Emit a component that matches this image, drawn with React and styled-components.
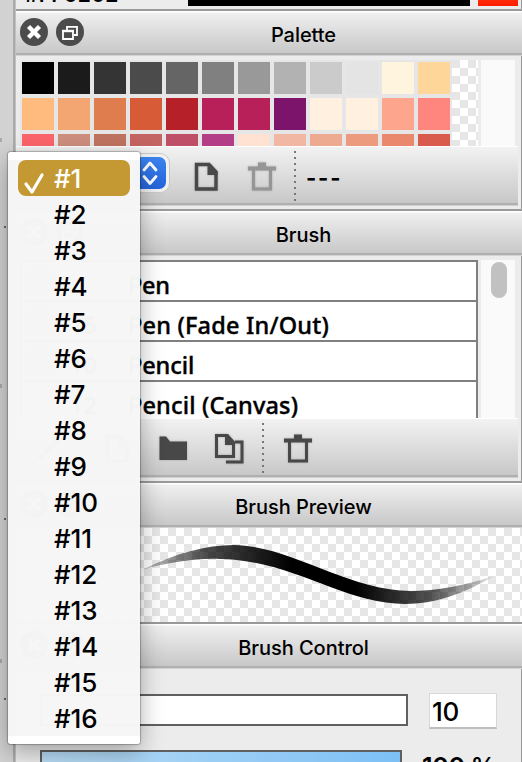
import React from "react";
import styled, { createGlobalStyle } from "styled-components";

const Global = createGlobalStyle`
  * { box-sizing: border-box; }
  body { margin: 0; overflow: hidden; background: #ececec; }
`;

const checker = "repeating-conic-gradient(#fff 0 25%, #e6e6e6 0 50%)";

const Window = styled.div`
  position: relative;
  display: flex;
  width: 522px;
  height: 762px;
  overflow: hidden;
  font-family: Inter, sans-serif;
  color: #000;
`;
const Gutter = styled.div`
  position: relative;
  flex: 0 0 16px;
  background: #d2d2d2;
  border-right: 1px solid #c0c0c0;
  box-shadow: inset -2px 0 #aaa;
`;
const Tick = styled.i`
  position: absolute;
  left: ${(p) => (p.$dot ? 4 : 0)}px;
  top: ${(p) => p.$y}px;
  width: 2px;
  height: ${(p) => (p.$dot ? 2 : 4)}px;
  background: ${(p) => (p.$dot ? "#666" : "#aaa")};
`;
const Docks = styled.main`
  width: 506px;
  height: 762px;
  display: flex;
  flex-direction: column;
  background: #ececec;
  border-right: 1px solid #999;
`;
const ColorRow = styled.div`
  position: relative;
  display: flex;
  flex: 0 0 9px;
  height: 9px;
  overflow: hidden;
  padding-left: 172px;
  gap: 8px;
`;
const Hex = styled.span`
  position: absolute;
  left: 9px;
  top: -17px;
  font-size: 21px;
  line-height: 24px;
  font-weight: 600;
  letter-spacing: 0.2px;
`;
const ColorBar = styled.span`
  width: ${(p) => p.$w}px;
  height: 6px;
  background: ${(p) => p.$c};
`;
const TitleBar = styled.header`
  display: flex;
  align-items: center;
  flex: 0 0 47px;
  height: 47px;
  margin-right: -1px;
  padding: 1px 0 0 4px;
  border-top: 2px solid #999;
  border-bottom: 1px solid #d4d4d4;
  background: linear-gradient(#fff 0 1px, #efefef 2px, #c8c8c8 42px, #b0b0b0 42px);
`;
const Title = styled.h2`
  flex: 1;
  margin: 3px 0 0;
  padding-right: 7px;
  text-align: center;
  font-size: 20px;
  font-weight: 500;
  line-height: 24px;
  letter-spacing: -0.05px;
`;
const BarIcon = styled.svg`
  display: block;
  width: 28px;
  height: 28px;
  margin: -4px 8px 0 0;
`;
const PaletteArea = styled.section`
  display: flex;
  flex: 0 0 90px;
  height: 90px;
  padding: 4px 6px 0 4px;
`;
const Swatches = styled.div`
  display: grid;
  grid-template-columns: repeat(12, 32px);
  grid-auto-rows: 32px;
  gap: 4px;
  width: 432px;
  height: 86px;
  padding: 2px;
  overflow: hidden;
  background: #e6e6e6;
`;
const Swatch = styled.span`
  background: ${(p) => p.$c};
`;
const Transparent = styled.div`
  width: 26px;
  background: ${checker} 0 0 / 16px 16px;
`;
const Track = styled.div`
  width: 34px;
  margin-left: 3px;
  padding: 2px 8px 0 10px;
  background: #fafafa;
`;
const Thumb = styled.div`
  height: 36px;
  border-radius: 8px;
  background: #c1c1c1;
`;
const Toolbar = styled.div`
  display: flex;
  align-items: center;
  flex: 0 0 60px;
  height: 60px;
  margin-right: 3px;
  padding-left: ${(p) => p.$pad}px;
  border-top: 1px solid #fff;
  border-bottom: 1px solid #d0d0d0;
  background: linear-gradient(#f2f2f2, #c8c8c8 calc(100% - 2px), #b0b0b0 calc(100% - 2px));
`;
const Spacer = styled.div`
  flex: 0 0 3px;
`;
const Combo = styled.div`
  display: flex;
  align-items: center;
  justify-content: flex-end;
  width: 152px;
  height: 40px;
  margin-top: -6px;
  padding-right: 3px;
  border: 1px solid #c9c9c9;
  border-radius: 10px;
  background: #f1f1f1;
`;
const Stepper = styled.svg`
  width: 32px;
  height: 32px;
  border-radius: 7px;
  background: linear-gradient(#3c84f0, #2464dc);
`;
const ToolIcon = styled.svg`
  flex: none;
  width: 32px;
  height: 32px;
  margin: 2px 0 0 ${(p) => p.$ml}px;
  color: ${(p) => (p.$off ? "#969696" : "#484848")};
  filter: drop-shadow(0 0 1px rgba(80, 80, 80, 0.35));
`;
const Divider = styled.i`
  width: 2px;
  height: 50px;
  margin-left: ${(p) => p.$ml}px;
  background: repeating-linear-gradient(#777 0 2px, transparent 2px 6px);
`;
const Dashes = styled.span`
  margin: 3px 0 0 10px;
  font-size: 22px;
  font-weight: 700;
  line-height: 26px;
  letter-spacing: 1.8px;
`;
const BrushArea = styled.section`
  display: flex;
  flex: 0 0 162px;
  height: 162px;
  padding: 4px 6px 0 4px;
  overflow: hidden;
`;
const BrushList = styled.div`
  width: 458px;
  border: solid #808080;
  border-width: 0 2px 0 2px;
  background: #fff;
`;
const BrushRow = styled.div`
  display: flex;
  align-items: flex-end;
  height: 40px;
  border-top: 2px solid #808080;
  font: 500 23.5px/29px "Noto Sans", sans-serif;
  -webkit-text-stroke: 0.4px #000;
  white-space: nowrap;
`;
const BrushThumb = styled.i`
  width: 28px;
  height: 28px;
  margin: 0 14px 6px 4px;
  background: ${(p) => p.$c};
`;
const BrushSize = styled.span`
  width: 60px;
  padding-left: 2px;
`;
const BrushName = styled.span`
  letter-spacing: ${(p) => p.$ls}px;
`;
const Preview = styled.svg`
  flex: 0 0 94px;
  width: 506px;
  height: 94px;
  background: ${checker} 8px 0 / 16px 16px;
`;
const Controls = styled.section`
  padding: 25px 0 0 24px;
`;
const ControlRow = styled.div`
  display: flex;
  height: 56px;
`;
const Slider = styled.div`
  width: ${(p) => p.$w}px;
  height: 32px;
  border: 2px solid #606060;
  background: ${(p) => p.$fill || "#fff"};
`;
const NumberBox = styled.div`
  width: 68px;
  height: 36px;
  margin: -1px 0 0 21px;
  padding-left: 2px;
  border: 1px solid #d8d8d8;
  border-bottom: 2px solid #bdbdbd;
  background: #fff;
  font-size: 26px;
  font-weight: 500;
  line-height: 35px;
  letter-spacing: -0.4px;
`;
const Percent = styled.span`
  margin: 2px 0 0 20px;
  font-size: 25px;
  font-weight: 600;
  line-height: 30px;
  letter-spacing: -0.3px;
  white-space: nowrap;
`;
const Menu = styled.div`
  position: absolute;
  left: 8px;
  top: 152px;
  width: 132px;
  height: 592px;
  padding: 8px 10px;
  border-radius: 3px;
  background: linear-gradient(#fff 0 8px, rgba(246, 246, 246, 0.985) 8px 584px, #fff 584px);
  box-shadow: 0 0 1px 1px rgba(0, 0, 0, 0.25), 0 8px 24px rgba(0, 0, 0, 0.32);
`;
const MenuItem = styled.div`
  display: flex;
  align-items: center;
  height: 36px;
  padding: 2px 0 0 ${(p) => (p.$on ? 5 : 36)}px;
  border-radius: 8px;
  background: ${(p) => (p.$on ? "#c49933" : "transparent")};
  color: ${(p) => (p.$on ? "#fff" : "#000")};
  font-size: 26px;
  font-weight: 500;
  line-height: 34px;
  letter-spacing: -0.1px;
`;
const Check = styled.svg`
  width: 24px;
  height: 26px;
  margin: 8px 7px 0 0;
`;

const rows = [
  ["#000", "#1b1b1b", "#343434", "#4b4b4b", "#656565", "#808080", "#999", "#b2b2b2", "#cbcbcb", "#e4e4e4", "#fff5df", "#ffd699"],
  ["#ffbb7e", "#f3a572", "#df7d4f", "#d65b36", "#b52029", "#b72059", "#b72059", "#7c146c", "#fff0df", "#fff0df", "#fea58e", "#ff867e"],
  ["#fb646a", "#cd8e7d", "#be735f", "#c46462", "#bf4f67", "#b33d87", "#ffe2d2", "#f1b7a3", "#edaa91", "#ed9b7f", "#e9886d", "#d95b4d"],
];
const brushes = [
  ["", "Pen", "#ccc", -0.3],
  ["15", "Pen (Fade In/Out)", "#ccc", 0.2],
  ["10", "Pencil", "#ccc", -0.1],
  ["12", "Pencil (Canvas)", "#eee", 0.15],
];

function TitleIcons() {
  return (
    <>
      <BarIcon viewBox="0 0 28 28">
        <circle cx="14" cy="14" r="14" fill="#4c4c4c" />
        <path d="M8.5 8.5l11 11M19.5 8.5L8.5 19.5" stroke="#fff" strokeWidth="4.4" />
      </BarIcon>
      <BarIcon viewBox="0 0 28 28">
        <circle cx="14" cy="14" r="14" fill="#4c4c4c" />
        <path d="M11 12V8.8h10V17h-3M7 13h10v8H7z" fill="none" stroke="#fff" strokeWidth="1.8" />
        <path d="M6 13h12" stroke="#fff" strokeWidth="2.4" />
      </BarIcon>
    </>
  );
}

function DockTitle({ children }) {
  return (
    <TitleBar>
      <TitleIcons />
      <Title>{children}</Title>
    </TitleBar>
  );
}

function PageIcon({ ml }) {
  return (
    <ToolIcon $ml={ml} viewBox="0 0 32 32">
      <path d="M6.5 3.5H19l7 7.5v17H6.500z" fill="none" stroke="currentColor" strokeWidth="3.4" />
      <path d="M17.500 3h3l7 8v3h-10z" fill="currentColor" />
    </ToolIcon>
  );
}

function TrashIcon({ ml, off }) {
  return (
    <ToolIcon $ml={ml} $off={off} viewBox="0 0 32 32">
      <path d="M12 1.500h8v4h10v4H2v-4h10z" fill="currentColor" />
      <path d="M7.500 9v19h17V9" fill="none" stroke="currentColor" strokeWidth="3" />
    </ToolIcon>
  );
}

export default function App() {
  return (
    <Window>
      <Global />
      <Gutter>
        <Tick $y={138} /><Tick $dot $y={226} /><Tick $y={384} />
        <Tick $dot $y={518} /><Tick $y={659} /><Tick $dot $y={698} />
      </Gutter>
      <Docks>
        <ColorRow>
          <Hex>#FF0202</Hex>
          <ColorBar $w={282} $c="#000" />
          <ColorBar $w={40} $c="linear-gradient(#ff2a08, #ff1c00)" />
        </ColorRow>
        <DockTitle>Palette</DockTitle>
        <PaletteArea>
          <Swatches>{rows.flat().map((c, i) => <Swatch key={i} $c={c} />)}</Swatches>
          <Transparent />
          <Track />
        </PaletteArea>
        <Toolbar $pad={2}>
          <Combo>
            <Stepper viewBox="0 0 32 32">
              <path d="M10 13l6-7 6 7M10 19.500l6 7 6-7" fill="none" stroke="#fff" strokeWidth="2.8" strokeLinecap="round" strokeLinejoin="round" />
            </Stepper>
          </Combo>
          <PageIcon ml={20} />
          <TrashIcon ml={24} off />
          <Divider $ml={16} />
          <Dashes>---</Dashes>
        </Toolbar>
        <Spacer />
        <DockTitle>Brush</DockTitle>
        <BrushArea>
          <BrushList>
            {brushes.map(([size, name, color, ls]) => (
              <BrushRow key={name}>
                <BrushThumb $c={color} />
                <BrushSize>{size}</BrushSize>
                <BrushName $ls={ls}>{name}</BrushName>
              </BrushRow>
            ))}
          </BrushList>
          <Track><Thumb /></Track>
        </BrushArea>
        <Toolbar $pad={0}>
          <ToolIcon $ml={16} viewBox="0 0 32 32">
            <path d="M4 27l5-7 4 4zM11 18L25 5l3 3-13 14z" fill="currentColor" />
          </ToolIcon>
          <PageIcon ml={37} />
          <ToolIcon $ml={24} viewBox="0 0 32 32">
            <path d="M2.500 3.500H9l4 5h17v18.500H2.500z" fill="currentColor" />
          </ToolIcon>
          <ToolIcon $ml={24} viewBox="0 0 32 32">
            <path d="M3.500 2.500h10l7 7v14h-17zM22 9h7v20H13" fill="none" stroke="currentColor" strokeWidth="3" />
            <path d="M12 1h3l7 8v3H12z" fill="currentColor" />
          </ToolIcon>
          <Divider $ml={17} />
          <TrashIcon ml={18} />
        </Toolbar>
        <Spacer />
        <DockTitle>Brush Preview</DockTitle>
        <Preview viewBox="0 0 506 94">
          <defs>
            <linearGradient id="ink" x1="126" x2="482" y1="0" y2="0" gradientUnits="userSpaceOnUse">
              <stop offset="0" stopOpacity=".2" />
              <stop offset=".18" stopOpacity=".7" />
              <stop offset=".42" stopOpacity="1" />
              <stop offset=".6" stopOpacity="1" />
              <stop offset=".82" stopOpacity=".65" />
              <stop offset="1" stopOpacity=".05" />
            </linearGradient>
          </defs>
          <path d="M126 42C160 25 190 17 218 17C276 18 330 62 395 63C420 63 450 57 478 48C448 66 418 76 389 76C328 76 276 32 204 31C180 30 154 34 126 42Z" fill="url(#ink)" />
        </Preview>
        <DockTitle>Brush Control</DockTitle>
        <Controls>
          <ControlRow>
            <Slider $w={368} />
            <NumberBox>10</NumberBox>
          </ControlRow>
          <ControlRow>
            <Slider $w={362} $fill="linear-gradient(90deg, #b8dcf5, #7dc0f5)" />
            <Percent>100 %</Percent>
          </ControlRow>
        </Controls>
      </Docks>
      <Menu>
        {Array.from({ length: 16 }, (_, i) => (
          <MenuItem key={i} $on={i === 0}>
            {i === 0 && (
              <Check viewBox="0 0 24 26">
                <path d="M3 14l6 8L19 5" fill="none" stroke="#fff" strokeWidth="3.2" strokeLinecap="round" strokeLinejoin="round" />
              </Check>
            )}
            #{i + 1}
          </MenuItem>
        ))}
      </Menu>
    </Window>
  );
}
